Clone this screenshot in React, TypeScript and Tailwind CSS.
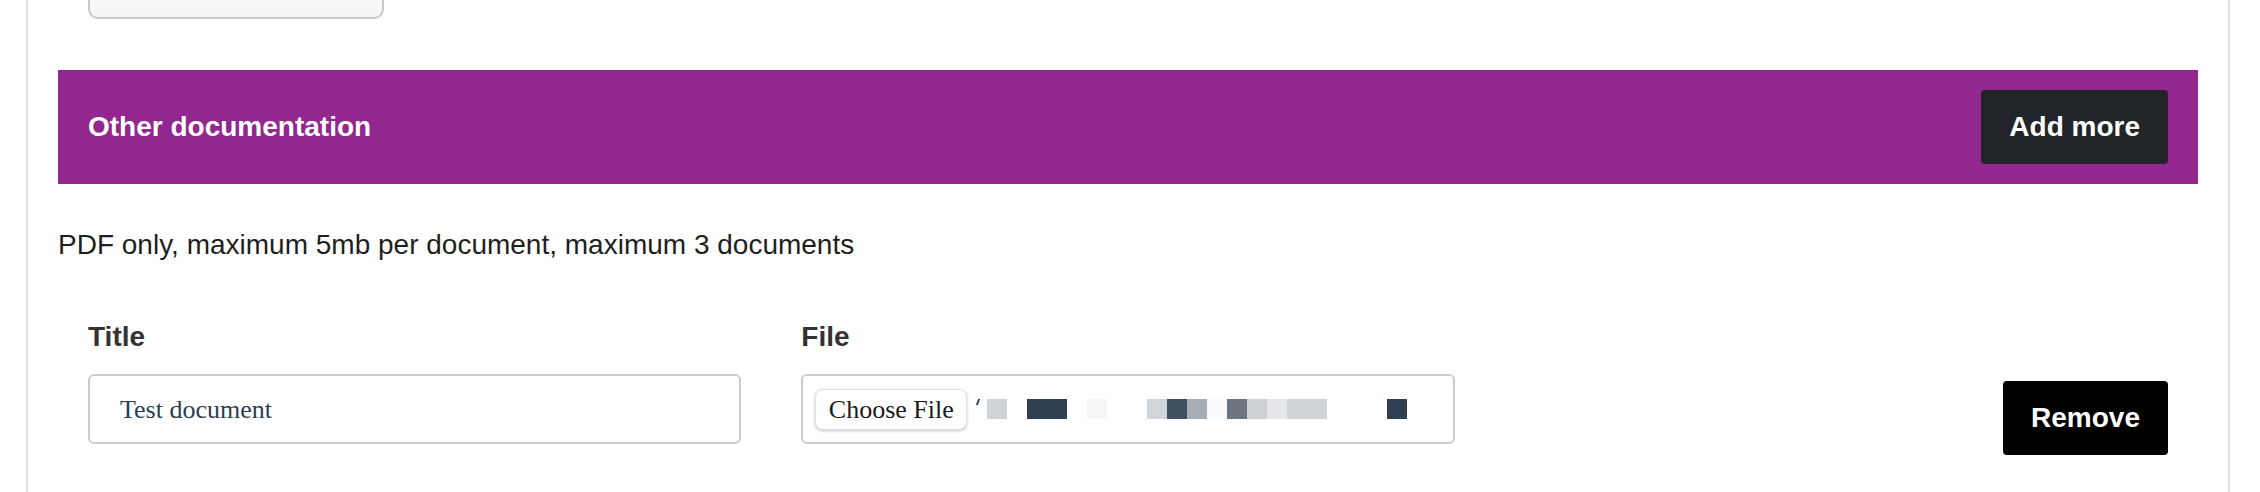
const mosaic = [
  "bg-[#cfd3d8]",
  "bg-transparent",
  "bg-[#2f3e50]",
  "bg-[#2f3e50]",
  "bg-transparent",
  "bg-[#f5f6f8]",
  "bg-transparent",
  "bg-transparent",
  "bg-[#d1d4d9]",
  "bg-[#435060]",
  "bg-[#a6adb4]",
  "bg-[#fafafa]",
  "bg-[#6c7580]",
  "bg-[#cdd0d5]",
  "bg-[#e6e7ea]",
  "bg-[#d0d3d8]",
  "bg-[#d0d3d8]",
  "bg-transparent",
  "bg-transparent",
  "bg-transparent",
  "bg-[#2f3e50]",
];

export default function App() {
  return (
    <div
      className="min-h-screen bg-white text-[#212529]"
      style={{ fontFamily: '"Liberation Sans", Arial, sans-serif' }}
    >
      <div className="ml-[26px] w-[2204px] min-h-[492px] overflow-hidden border-x-2 border-[#dedede] px-[30px]">
        {/* Previous section's button, cut off at the top */}
        <div className="pl-[30px]">
          <div className="-mt-[22px] h-[41px] w-[296px] rounded-[10px] border-2 border-[#c8c8c8] bg-gradient-to-b from-white to-[#f4f4f4]" />
        </div>

        {/* Section header */}
        <div className="mt-[51px] flex h-[114px] items-center justify-between bg-[#92278f] px-[30px]">
          <h2 className="text-[28px] font-bold text-white">Other documentation</h2>
          <button className="h-[74px] rounded-[4px] bg-[#212529] px-[28px] text-[28px] font-bold text-white">
            Add more
          </button>
        </div>

        <p className="mt-[40px] text-[28px] leading-[42px] text-[#1f1f1f]">
          PDF only, maximum 5mb per document, maximum 3 documents
        </p>

        {/* Document row */}
        <div className="mt-[50px] grid grid-cols-3">
          <div className="px-[30px]">
            <label className="block text-[28px] font-bold leading-[42px] text-[#333333]">Title</label>
            <div
              className="mt-[16px] flex h-[70px] items-center rounded-[6px] border-2 border-[#cccccc] px-[30px] text-[26px] text-[#2c3e50]"
              style={{ fontFamily: '"Liberation Serif", "Times New Roman", serif' }}
            >
              Test document
            </div>
          </div>

          <div className="px-[30px]">
            <label className="block text-[28px] font-bold leading-[42px] text-[#333333]">File</label>
            <div
              className="mt-[16px] flex h-[70px] items-center rounded-[6px] border-2 border-[#cccccc] pl-[12px]"
              style={{ fontFamily: '"Liberation Serif", "Times New Roman", serif' }}
            >
              <span className="flex h-[41px] w-[152px] items-center justify-center rounded-[8px] border border-[#e2e2e2] bg-white text-[26px] text-[#1a1a1a] shadow-[0_1px_3px_rgba(0,0,0,0.25)]">
                Choose File
              </span>
              <span className="ml-[10px] mb-[14px] h-[6px] w-[2px] skew-x-[-20deg] bg-[#2f3e50]" />
              <div className="ml-[8px] flex">
                {mosaic.map((c, i) => (
                  <span key={i} className={`h-[20px] w-[20px] ${c}`} />
                ))}
              </div>
            </div>
          </div>

          <div className="flex justify-end px-[30px] pt-[65px]">
            <button className="h-[74px] w-[165px] rounded-[4px] bg-black text-[28px] font-bold text-white">
              Remove
            </button>
          </div>
        </div>
      </div>
    </div>
  );
}
